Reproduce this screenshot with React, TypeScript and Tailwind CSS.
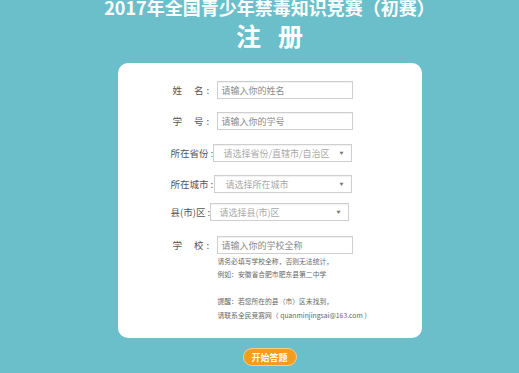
import React from "react";

function Field({ w, ml, text, select, pl }: { w: string; ml?: string; text: string; select?: boolean; pl: string }) {
  return (
    <div
      className={`${w} ${ml ?? ""} h-[18px] border border-[#cfcfcf] bg-white flex items-center justify-between pr-[7px] ${pl} shadow-[inset_0_1px_1px_rgba(0,0,0,0.06)]`}
    >
      <span className={`text-[9px] leading-none whitespace-nowrap ${select ? "text-[#a8a8a8]" : "text-[#8a8a8a]"}`}>{text}</span>
      {select && <span className="text-[4px] leading-none text-[#777]">▼</span>}
    </div>
  );
}

export default function App() {
  return (
    <div className="w-[519px] h-[373px] overflow-hidden bg-[#6bbfcb] pl-[20px] flex flex-col items-center font-['Noto_Sans_CJK_SC','Microsoft_YaHei',sans-serif]">
      <div className="-mt-[2px] text-[18px] leading-[18px] font-bold text-white whitespace-nowrap">
        2017年全国青少年禁毒知识竞赛（初赛）
      </div>
      <div className="mt-[7px] flex gap-[17px] text-[25px] leading-[25px] font-bold text-white">
        <span>注</span>
        <span>册</span>
      </div>
      <div className="mt-[15px] w-[304px] h-[275px] bg-white rounded-[10px] pt-[18px] pl-[53px] text-[9.5px] text-[#555]">
        {/* 姓名 */}
        <div className="flex items-center h-[18px]">
          <div className="w-[46px] shrink-0 flex items-center pl-[2px] whitespace-nowrap">
            <span>姓</span>
            <span className="ml-[12px]">名</span>
            <span className="ml-[3px]">:</span>
          </div>
          <Field w="w-[136px]" text="请输入你的姓名" pl="pl-[4px]" />
        </div>
        {/* 学号 */}
        <div className="mt-[13px] flex items-center h-[18px]">
          <div className="w-[46px] shrink-0 flex items-center pl-[2px] whitespace-nowrap">
            <span>学</span>
            <span className="ml-[12px]">号</span>
            <span className="ml-[3px]">:</span>
          </div>
          <Field w="w-[136px]" text="请输入你的学号" pl="pl-[4px]" />
        </div>
        {/* 省份 */}
        <div className="mt-[14px] flex items-center h-[18px]">
          <div className="w-[42px] shrink-0 flex items-center whitespace-nowrap">
            <span>所在省份</span>
            <span className="ml-[2px]">:</span>
          </div>
          <Field w="w-[139px]" text="请选择省份/直辖市/自治区" select pl="pl-[10px]" />
        </div>
        {/* 城市 */}
        <div className="mt-[13px] flex items-center h-[18px]">
          <div className="w-[43px] shrink-0 flex items-center whitespace-nowrap">
            <span>所在城市</span>
            <span className="ml-[2px]">:</span>
          </div>
          <Field w="w-[138px]" text="请选择所在城市" select pl="pl-[11px]" />
        </div>
        {/* 县区 */}
        <div className="mt-[10px] flex items-center h-[18px]">
          <div className="w-[39px] shrink-0 flex items-center whitespace-nowrap">
            <span>县(市)区</span>
            <span className="ml-[2px]">:</span>
          </div>
          <Field w="w-[139px]" text="请选择县(市)区" select pl="pl-[9px]" />
        </div>
        {/* 学校 */}
        <div className="mt-[15px] flex items-center h-[18px]">
          <div className="w-[46px] shrink-0 flex items-center pl-[2px] whitespace-nowrap">
            <span>学</span>
            <span className="ml-[12px]">校</span>
            <span className="ml-[3px]">:</span>
          </div>
          <Field w="w-[136px]" text="请输入你的学校全称" pl="pl-[4px]" />
        </div>
        <div className="ml-[47px] mt-[1px] text-[6.8px] leading-[13.4px] text-[#666] whitespace-nowrap">
          <div>请务必填写学校全称，否则无法统计，</div>
          <div>例如：安徽省合肥市肥东县第二中学</div>
          <div className="h-[13.4px]"></div>
          <div>提醒：若您所在的县（市）区未找到，</div>
          <div>请联系全民竞赛网（ quanminjingsai@163.com ）</div>
        </div>
      </div>
      <button className="mt-[10px] w-[54px] h-[18px] rounded-full bg-[#f49c1e] border-[1.5px] border-[#f8cf86] text-white text-[9px] font-bold leading-none flex items-center justify-center">
        开始答题
      </button>
    </div>
  );
}
